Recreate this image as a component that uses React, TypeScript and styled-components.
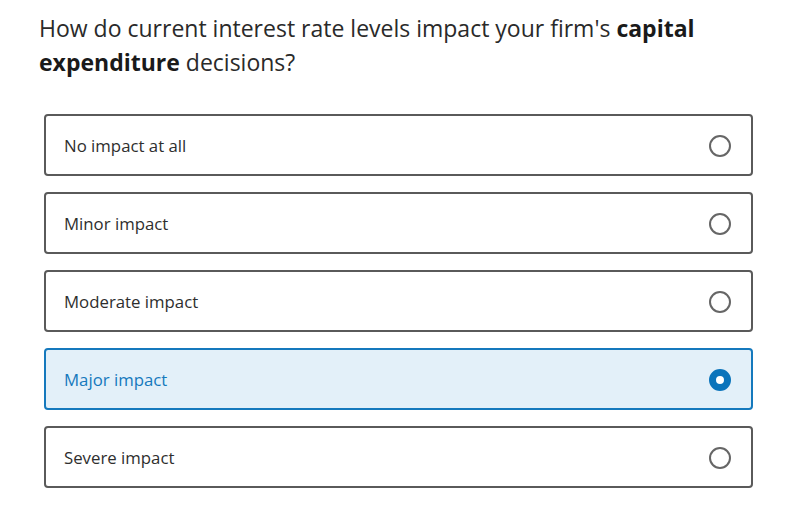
import { FC, useState } from "react";
import styled, { createGlobalStyle } from "styled-components";

const GlobalStyle = createGlobalStyle`
  body {
    margin: 0;
    background: #ffffff;
    font-family: "Open Sans", "Liberation Sans", sans-serif;
    color: #262626;
  }
`;

const options = [
  { id: 1, label: "No impact at all" },
  { id: 2, label: "Minor impact" },
  { id: 3, label: "Moderate impact" },
  { id: 4, label: "Major impact" },
  { id: 5, label: "Severe impact" },
];

const App: FC = () => {
  const [selected, setSelected] = useState(4);

  return (
    <>
      <GlobalStyle />
      <Page>
        <Question>
          How do current interest rate levels impact your firm's{" "}
          <strong>capital</strong> <strong>expenditure</strong> decisions?
        </Question>
        <List role="radiogroup">
          {options.map(({ id, label }) => (
            <Option
              key={id}
              $active={selected === id}
              role="radio"
              aria-checked={selected === id}
              onClick={() => setSelected(id)}
            >
              <Label>{label}</Label>
              <Radio $active={selected === id} />
            </Option>
          ))}
        </List>
      </Page>
    </>
  );
};

const Page = styled.main`
  display: flex;
  flex-direction: column;
  padding: 11px 42px 0 44px;
`;

const Question = styled.h1`
  margin: 0 0 35px -5px;
  max-width: 690px;
  font-size: 23px;
  line-height: 34px;
  font-weight: 400;
  color: #2a2a2a;

  strong {
    font-weight: 700;
    color: #1a1a1a;
  }
`;

const List = styled.div`
  display: flex;
  flex-direction: column;
  gap: 16px;
`;

const Option = styled.div<{ $active: boolean }>`
  display: flex;
  align-items: center;
  justify-content: space-between;
  box-sizing: border-box;
  height: 62px;
  padding: 1px 20px 0 18px;
  border: 2px solid ${(p) => (p.$active ? "#1579bd" : "#5a5a5a")};
  border-radius: 4px;
  background: ${(p) => (p.$active ? "#e3f0f9" : "#ffffff")};
  color: ${(p) => (p.$active ? "#1579bd" : "#2e2e2e")};
  cursor: pointer;
`;

const Label = styled.span`
  font-size: 16.8px;
  line-height: 22px;
`;

const Radio = styled.span<{ $active: boolean }>`
  box-sizing: border-box;
  width: 22px;
  height: 22px;
  border-radius: 50%;
  border: ${(p) => (p.$active ? "7px solid #0b74bb" : "2px solid #666666")};
  background: #ffffff;
`;

export default App;
